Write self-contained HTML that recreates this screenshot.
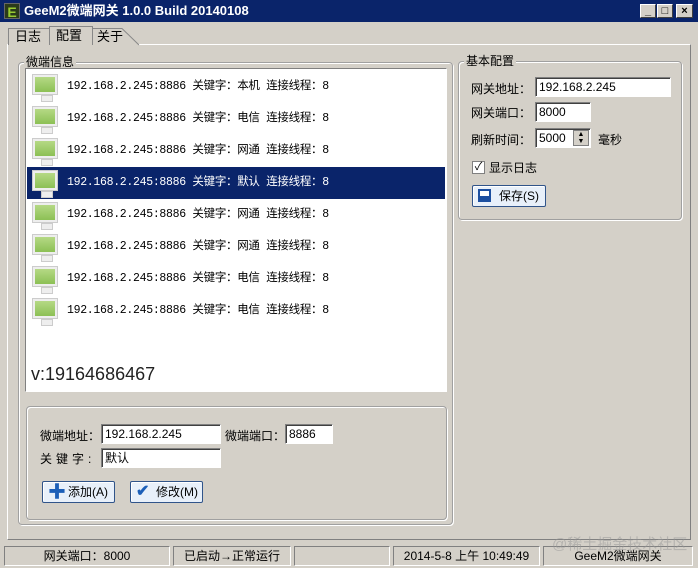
<!DOCTYPE html><html><head><meta charset="utf-8"><style>
*{margin:0;padding:0;box-sizing:border-box}
body{width:698px;height:568px;background:#d4d0c8;font-family:"Liberation Sans","Noto Sans CJK SC",sans-serif;font-size:12px;color:#000;position:relative;overflow:hidden}
.a{position:absolute}
.title{left:0;top:0;width:698px;height:22px;background:#0a246a;color:#fff;font-weight:bold;font-size:13px;line-height:22px}
.tb{width:16px;height:14px;top:4px;background:#d4d0c8;border:1px solid;border-color:#fff #404040 #404040 #fff;color:#000;font-size:11px;line-height:12px;text-align:center}
.grp{border:1px solid #a0a0a0;border-radius:4px;box-shadow:1px 1px 0 #fff inset,1px 1px 0 #fff}
.lg{background:#d4d0c8;padding:0 2px;line-height:14px}
.inp{background:#fff;border:1px solid;border-color:#808080 #fff #fff #808080;box-shadow:inset 1px 1px 0 #404040;height:20px;line-height:18px;padding-left:3px;font-size:12px}
.row{left:27px;width:418px;height:32px;line-height:32px;font-size:12px}
.mon{position:absolute;left:6px;top:4px;width:24px;height:19px;background:linear-gradient(#b5d985,#8cc055);border:2px solid #eee;box-shadow:0 0 0 1px #ccc}
.mon:after{content:"";position:absolute;left:6px;top:18px;width:10px;height:5px;background:#eee;border:1px solid #ccc}
.row span{position:absolute;left:40px;font-family:"Liberation Mono","Noto Sans CJK SC",monospace;font-size:11.5px;letter-spacing:-0.3px}
.btn{background:#e8f0fa;border:1px solid #30548a;border-radius:2px;box-shadow:inset 1px 1px 0 #fff;height:22px;line-height:20px;font-size:12px}
.sb{top:546px;height:20px;border:1px solid;border-color:#808080 #fff #fff #808080;text-align:center;line-height:18px;font-size:12px}
</style></head><body>
<div class="a title"><span class="a" style="left:4px;top:3px;width:16px;height:16px;background:#2b3a1a;color:#9c3;font-size:14px;line-height:16px;text-align:center;border:1px solid #666">E</span><span class="a" style="left:24px">GeeM2微端网关 1.0.0 Build 20140108</span>
<div class="a tb" style="left:640px">_</div><div class="a tb" style="left:657px">□</div><div class="a tb" style="left:676px;width:17px">×</div></div>
<div class="a" style="left:7px;top:44px;width:684px;height:496px;border:1px solid;border-color:#fff #808080 #808080 #fff"></div>
<div class="a" style="left:8px;top:28px;width:42px;height:17px;border:1px solid #888;border-bottom:none;background:#d4d0c8;padding-left:6px;line-height:15px;font-size:13px">日志</div>
<div class="a" style="left:49px;top:26px;width:44px;height:19px;border:1px solid #888;border-bottom:none;background:#d4d0c8;padding-left:6px;line-height:18px;font-size:13px;z-index:2">配置</div>
<svg class="a" style="left:92px;top:27px" width="52" height="19"><path d="M0.5 18V1.5H30L47 18" fill="#d4d0c8" stroke="#888"/><text x="5" y="14" font-size="13" font-family="Noto Sans CJK SC">关于</text></svg>
<div class="a grp" style="left:18px;top:62px;width:435px;height:463px"></div>
<div class="a lg" style="left:24px;top:55px">微端信息</div>
<div class="a" style="left:25px;top:68px;width:422px;height:324px;background:#fff;border:1px solid;border-color:#808080 #fff #fff #808080"></div>
<div class="a row" style="top:71px"><i class="mon"></i><span>192.168.2.245:8886 关键字：本机 连接线程：8</span></div>
<div class="a row" style="top:103px"><i class="mon"></i><span>192.168.2.245:8886 关键字：电信 连接线程：8</span></div>
<div class="a row" style="top:135px"><i class="mon"></i><span>192.168.2.245:8886 关键字：网通 连接线程：8</span></div>
<div class="a row" style="top:167px;background:#0a246a;color:#fff"><i class="mon"></i><span>192.168.2.245:8886 关键字：默认 连接线程：8</span></div>
<div class="a row" style="top:199px"><i class="mon"></i><span>192.168.2.245:8886 关键字：网通 连接线程：8</span></div>
<div class="a row" style="top:231px"><i class="mon"></i><span>192.168.2.245:8886 关键字：网通 连接线程：8</span></div>
<div class="a row" style="top:263px"><i class="mon"></i><span>192.168.2.245:8886 关键字：电信 连接线程：8</span></div>
<div class="a row" style="top:295px"><i class="mon"></i><span>192.168.2.245:8886 关键字：电信 连接线程：8</span></div>
<div class="a" style="left:31px;top:364px;font-size:18px;color:#222">v:19164686467</div>
<div class="a grp" style="left:26px;top:406px;width:421px;height:114px"></div>
<div class="a" style="left:40px;top:427px">微端地址：</div><div class="a inp" style="left:101px;top:424px;width:120px">192.168.2.245</div>
<div class="a" style="left:225px;top:427px">微端端口：</div><div class="a inp" style="left:285px;top:424px;width:48px">8886</div>
<div class="a" style="left:40px;top:450px;letter-spacing:4px">关键字:</div><div class="a inp" style="left:101px;top:448px;width:120px">默认</div>
<div class="a btn" style="left:42px;top:481px;width:73px"><b class="a" style="left:5px;top:0;color:#1c5fb8;font-size:18px">✚</b><span class="a" style="left:25px">添加(A)</span></div>
<div class="a btn" style="left:130px;top:481px;width:73px"><b class="a" style="left:5px;top:0;color:#1c5fb8;font-size:16px">✔</b><span class="a" style="left:25px">修改(M)</span></div>
<div class="a grp" style="left:458px;top:61px;width:224px;height:159px"></div>
<div class="a lg" style="left:464px;top:54px">基本配置</div>
<div class="a" style="left:471px;top:80px">网关地址：</div><div class="a inp" style="left:535px;top:77px;width:136px">192.168.2.245</div>
<div class="a" style="left:471px;top:104px">网关端口：</div><div class="a inp" style="left:535px;top:102px;width:56px">8000</div>
<div class="a" style="left:471px;top:131px">刷新时间：</div><div class="a inp" style="left:535px;top:128px;width:56px">5000</div>
<div class="a" style="left:573px;top:130px;width:16px;height:16px;background:#d4d0c8;border:1px solid #808080;font-size:7px;line-height:7px;text-align:center">▲<br>▼</div>
<div class="a" style="left:598px;top:131px">毫秒</div>
<div class="a" style="left:472px;top:161px;width:13px;height:13px;background:#fff;border:1px solid #808080;font-size:11px;line-height:11px;text-align:center">✓</div>
<div class="a" style="left:489px;top:159px">显示日志</div>
<div class="a btn" style="left:472px;top:185px;width:74px"><b class="a" style="left:5px;top:3px;width:13px;height:13px;background:#1c4fa0;border:2px solid #1c4fa0;box-shadow:inset 0 5px 0 #fff"></b><span class="a" style="left:26px">保存(S)</span></div>
<div class="a sb" style="left:4px;top:546px;width:166px">网关端口：8000</div>
<div class="a sb" style="left:173px;width:118px">已启动→正常运行</div>
<div class="a sb" style="left:294px;width:96px"></div>
<div class="a sb" style="left:393px;width:147px">2014-5-8 上午 10:49:49</div>
<div class="a sb" style="left:543px;width:150px">GeeM2微端网关</div>
<div class="a" style="left:552px;top:533px;color:rgba(150,150,150,.5);font-size:15px">@稀土掘金技术社区</div>
</body></html>
